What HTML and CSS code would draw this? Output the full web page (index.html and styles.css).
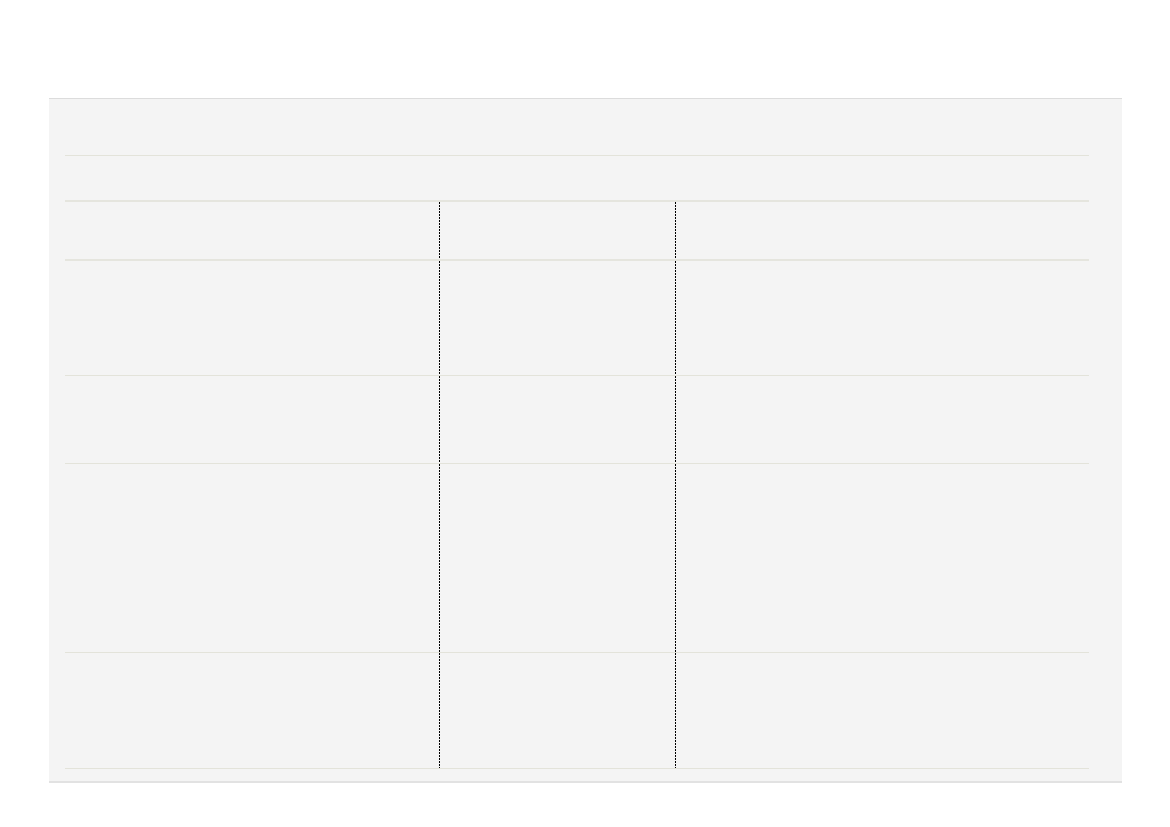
FILE: index.html
```html
<!DOCTYPE html>
<html lang="en">
<head>
<meta charset="utf-8">
<title>Table</title>
<link rel="stylesheet" href="styles.css">
</head>
<body>
<div class="page">
  <section class="panel">
    <div class="panel-head"></div>
    <table class="grid">
      <colgroup>
        <col class="c1">
        <col class="c2">
        <col class="c3">
      </colgroup>
      <thead>
        <tr class="r-head"><th></th><th></th><th></th></tr>
      </thead>
      <tbody>
        <tr class="r1"><td></td><td></td><td></td></tr>
        <tr class="r2"><td></td><td></td><td></td></tr>
        <tr class="r3"><td></td><td></td><td></td></tr>
        <tr class="r4"><td></td><td></td><td></td></tr>
      </tbody>
    </table>
  </section>
</div>
</body>
</html>
```

FILE: styles.css
```css
html, body {
  margin: 0;
  padding: 0;
  background: #ffffff;
  font-family: "Liberation Sans", Arial, sans-serif;
}

.page {
  padding: 98px 48px 0 49px;
}

.panel {
  width: 1073px;
  box-sizing: border-box;
  background: #f4f4f4;
  border-top: 1px solid #dcdcdc;
  border-bottom: 2px solid #e2e2e2;
  padding: 0 33px 12px 16px;
}

.panel-head {
  height: 56px;
  border-bottom: 1px solid #e3e3da;
  margin-bottom: 44px;
}

.grid {
  width: 1024px;
  table-layout: fixed;
  border-collapse: separate;
  border-spacing: 0;
  border-top: 2px solid #e5e5de;
}

.c1 { width: 375px; }
.c2 { width: 236px; }
.c3 { width: 413px; }

.grid th,
.grid td {
  padding: 0;
  border-bottom: 1px solid #e3e3da;
}

.grid th {
  border-bottom: 2px solid #e5e5de;
}

.grid th:nth-child(1),
.grid th:nth-child(2),
.grid td:nth-child(1),
.grid td:nth-child(2) {
  background-image: linear-gradient(to bottom, #000000 0, #000000 2px, transparent 2px, transparent 3px);
  background-size: 1px 3px;
  background-repeat: repeat-y;
  background-position: right top;
  background-origin: border-box;
  background-clip: border-box;
}

.r-head th { height: 57px; }
.r1 td { height: 114px; }
.r2 td { height: 87px; }
.r3 td { height: 188px; }
.r4 td { height: 115px; }
```
